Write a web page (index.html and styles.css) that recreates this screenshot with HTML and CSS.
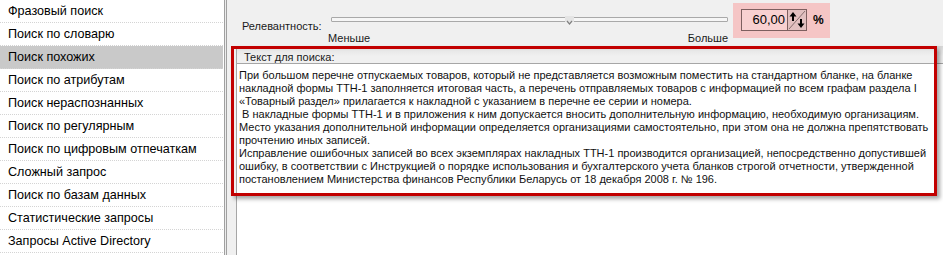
FILE: index.html
```html
<!DOCTYPE html>
<html lang="ru">
<head>
<meta charset="utf-8">
<title>Поиск</title>
<link rel="stylesheet" href="styles.css">
</head>
<body>
<div class="app">
  <ul class="nav">
    <li class="nav-item">Фразовый поиск</li>
    <li class="nav-item">Поиск по словарю</li>
    <li class="nav-item is-active">Поиск похожих</li>
    <li class="nav-item">Поиск по атрибутам</li>
    <li class="nav-item">Поиск нераспознанных</li>
    <li class="nav-item">Поиск по регулярным</li>
    <li class="nav-item">Поиск по цифровым отпечаткам</li>
    <li class="nav-item">Сложный запрос</li>
    <li class="nav-item">Поиск по базам данных</li>
    <li class="nav-item">Статистические запросы</li>
    <li class="nav-item">Запросы Active Directory</li>
  </ul>
  <div class="splitter"></div>
  <main class="main">
    <div class="rel-row">
      <span class="rel-label">Релевантность:</span>
      <div class="slider">
        <div class="track">
          <svg class="thumb" width="9" height="10" viewBox="0 0 9 10">
            <rect x="0" y="0" width="9" height="6" fill="#e4e4e4"/>
            <path d="M2 5 L4.5 8 L7 5" fill="none" stroke="#808080" stroke-width="1.2"/>
          </svg>
        </div>
        <div class="ticks"><span>Меньше</span><span>Больше</span></div>
      </div>
      <div class="spin-wrap">
        <div class="spin">
          <span class="spin-val">60,00</span>
          <span class="spin-btn">
            <svg width="18" height="20" viewBox="0 0 18 20">
              <line x1="1" y1="19" x2="17" y2="1" stroke="#8a7070" stroke-width="1"/>
              <path d="M5 2 L1.5 6.5 H4 V11 H6 V6.5 H8.5 Z" fill="#000"/>
              <path d="M13 18 L9.5 13.5 H12 V9 H14 V13.5 H16.5 Z" fill="#000"/>
            </svg>
          </span>
        </div>
        <span class="pct">%</span>
      </div>
    </div>
    <section class="panel">
      <div class="panel-head">Текст для поиска:</div>
      <div class="panel-body">
        <div class="line">При большом перечне отпускаемых товаров, который не представляется возможным поместить на стандартном бланке, на бланке</div>
        <div class="line">накладной формы ТТН-1 заполняется итоговая часть, а перечень отправляемых товаров с информацией по всем графам раздела I</div>
        <div class="line">«Товарный раздел» прилагается к накладной с указанием в перечне ее серии и номера.</div>
        <div class="line"> В накладные формы ТТН-1 и в приложения к ним допускается вносить дополнительную информацию, необходимую организациям.</div>
        <div class="line">Место указания дополнительной информации определяется организациями самостоятельно, при этом она не должна препятствовать</div>
        <div class="line">прочтению иных записей.</div>
        <div class="line">Исправление ошибочных записей во всех экземплярах накладных ТТН-1 производится организацией, непосредственно допустившей</div>
        <div class="line">ошибку, в соответствии с Инструкцией о порядке использования и бухгалтерского учета бланков строгой отчетности, утвержденной</div>
        <div class="line">постановлением Министерства финансов Республики Беларусь от 18 декабря 2008 г. № 196.</div>
      </div>
    </section>
    <div class="highlight"></div>
  </main>
</div>
</body>
</html>
```
FILE: styles.css
```css
html, body {
  margin: 0;
  padding: 0;
  background: #ffffff;
}
body {
  font-family: "Liberation Sans", Arial, sans-serif;
  color: #000;
}
.app {
  display: flex;
  width: 943px;
  height: 255px;
  overflow: hidden;
}
.nav {
  list-style: none;
  margin: 0;
  padding: 0;
  width: 223px;
  flex: 0 0 223px;
  background: #fff;
  border-right: 1px solid #ffffff;
}
.nav-item {
  height: 21px;
  line-height: 21px;
  padding: 1px 0 0 8px;
  font-size: 12.6px;
  border-bottom: 1px dotted #d4d4d4;
  white-space: nowrap;
}
.nav-item.is-active {
  background: #c9c9c9;
}
.splitter {
  flex: 0 0 1px;
  width: 1px;
  background: #ececec;
  border-left: 1px solid #a0a0a0;
  border-right: 1px solid #a0a0a0;
}
.main {
  position: relative;
  flex: 1;
  background: #f0f0f0;
  display: flex;
  flex-direction: column;
  font-size: 11px;
}
.rel-row {
  height: 46px;
  display: flex;
  align-items: flex-start;
}
.rel-label {
  flex: 0 0 89px;
  padding-left: 15px;
  margin-top: 19px;
  font-size: 11px;
  line-height: 14px;
  color: #1a1a1a;
}
.slider {
  width: 397px;
  flex: 0 0 397px;
  margin-top: 17px;
}
.track {
  position: relative;
  height: 3px;
  border: 1px solid #a9a9a9;
  background: #f6f6f6;
  border-radius: 1px;
}
.thumb {
  position: absolute;
  left: 233px;
  top: -2px;
}
.ticks {
  display: flex;
  justify-content: space-between;
  margin-top: 9px;
  margin-left: -3px;
  font-size: 11px;
  line-height: 14px;
  color: #1a1a1a;
}
.spin-wrap {
  margin-left: 5px;
  margin-top: 3px;
  width: 97px;
  height: 35px;
  box-sizing: border-box;
  padding: 6px 0 0 8px;
  background: #f5c5c5;
  display: flex;
  align-items: flex-start;
}
.spin {
  width: 66px;
  height: 22px;
  box-sizing: border-box;
  border: 1px solid #7d5f5f;
  background: #f8d0d0;
  display: flex;
}
.spin-val {
  flex: 1;
  text-align: right;
  padding-right: 2px;
  font-size: 13px;
  line-height: 20px;
}
.spin-btn {
  width: 18px;
  height: 20px;
  border-left: 1px solid #7d5f5f;
  background: #e2c0c0;
  display: block;
}
.spin-btn svg {
  display: block;
}
.pct {
  margin-left: 6px;
  font-size: 12px;
  font-weight: bold;
  line-height: 22px;
}
.panel {
  flex: 1;
  margin-left: 9px;
  border-left: 1px solid #a6a6a6;
  display: flex;
  flex-direction: column;
}
.panel-head {
  height: 18px;
  box-sizing: border-box;
  padding: 5px 0 0 7px;
  font-size: 11px;
  line-height: 13px;
  color: #1a1a1a;
  background: linear-gradient(#d4d4d4 0px, #e8e8e8 5px, #f0f0f0 10px);
  border-bottom: 1px solid #a6a6a6;
}
.panel-body {
  flex: 1;
  background: #fff;
  padding: 5px 0 0 2px;
}
.line {
  white-space: pre;
  font-size: 11px;
  line-height: 13px;
  color: #111;
}
.highlight {
  position: absolute;
  left: 4px;
  top: 46px;
  width: 706px;
  height: 150px;
  box-sizing: border-box;
  border: 3px solid #c20000;
  box-shadow: 3px 3px 4px rgba(0, 0, 0, 0.35);
}
```
